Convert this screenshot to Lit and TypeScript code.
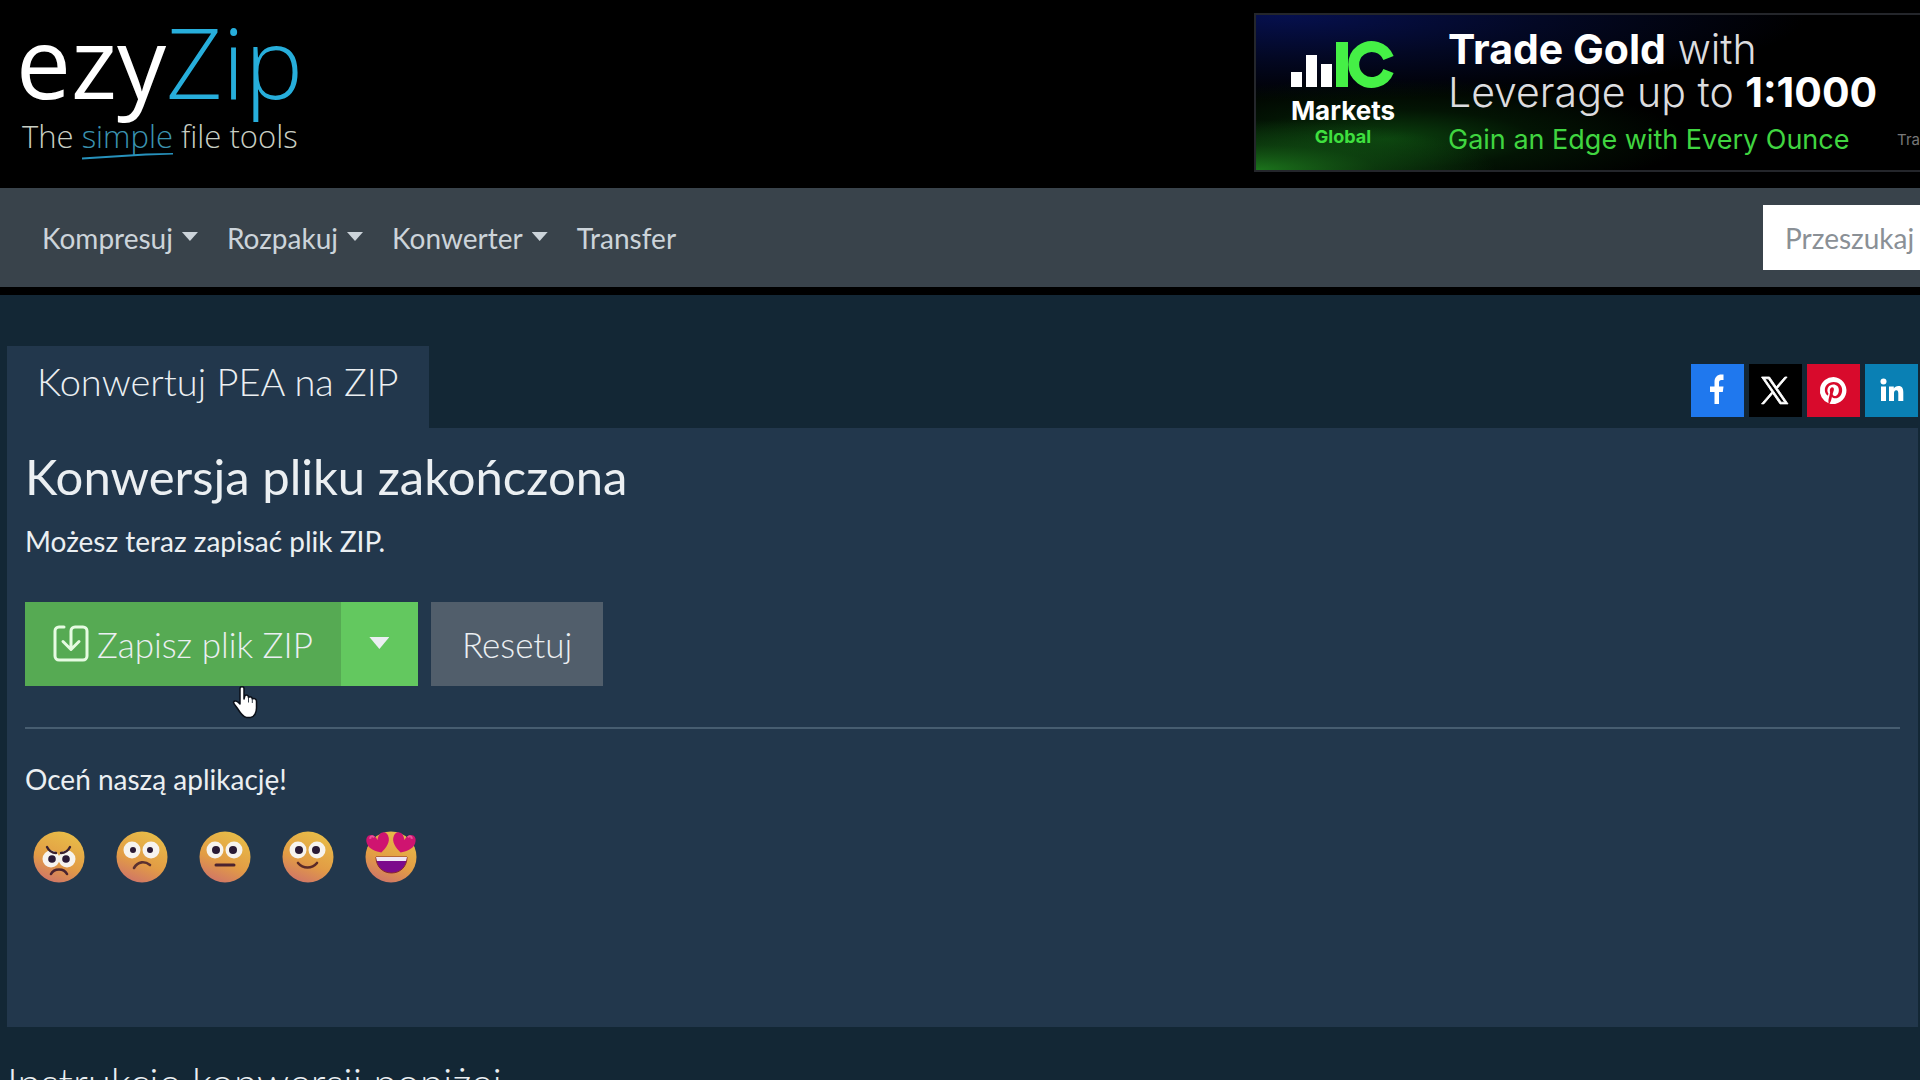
import { LitElement, html, css, svg } from "lit";
import { customElement } from "lit/decorators.js";

const navItems = [
  { label: "Kompresuj", menu: true },
  { label: "Rozpakuj", menu: true },
  { label: "Konwerter", menu: true },
  { label: "Transfer", menu: false },
];

const heart = "M0 4C-3 -5 -13 -3 -11 6C-10 12 -3 15 2 17C7 13 13 8 11 1C9 -5 2 -4 0 4Z";

const eyes = (left: number, right: number, y: number, pupil: number) => svg`
  <circle cx=${left} cy=${y} r="8.5" fill="#f6f3ee"/>
  <circle cx=${right} cy=${y} r="8.5" fill="#f6f3ee"/>
  <circle cx=${left + 1} cy=${y} r=${pupil} fill="#2a1a35"/>
  <circle cx=${right - 1} cy=${y} r=${pupil} fill="#2a1a35"/>`;

const faces = [
  {
    label: "Bardzo źle",
    art: svg`${eyes(18, 34, 28, 3.8)}
      <path d="M14 16c2 4 5 6 9 6M37 16c-2 4-5 6-9 6" fill="none" stroke="#3a2030" stroke-width="2.4" stroke-linecap="round"/>
      <path d="M18 43c3-6 13-6 16 0" fill="none" stroke="#4a2330" stroke-width="2.6" stroke-linecap="round"/>`,
  },
  {
    label: "Źle",
    art: svg`${eyes(16, 35, 19, 3)}
      <path d="M18 37c4-7 11-7 16-3" fill="none" stroke="#5a3030" stroke-width="2.6" stroke-linecap="round"/>`,
  },
  {
    label: "Średnio",
    art: svg`${eyes(16, 35, 19, 4)}
      <path d="M17 34h18" fill="none" stroke="#4a2330" stroke-width="3" stroke-linecap="round"/>`,
  },
  {
    label: "Dobrze",
    art: svg`${eyes(16, 35, 19, 4)}
      <path d="M16 32c5 6 14 6 19 0" fill="none" stroke="#5a2a28" stroke-width="2.6" stroke-linecap="round"/>`,
  },
  {
    label: "Bardzo dobrze",
    art: svg`
      <path d="M11 26h31c0 9-6 16-15.500 16S11 35 11 26z" fill="#7c0a8c" stroke="#8a2a2c" stroke-width="1"/>
      <path d="M11 26h31l-1 4H12z" fill="#eee6f4"/>
      <g transform="translate(12 5) rotate(-8)"><path d=${heart} fill="#cf1470"/><path d="M-7 2c0-3 3-3 4-1" stroke="#e8559a" stroke-width="2" fill="none"/></g>
      <g transform="translate(40 5) scale(-1 1) rotate(-8)"><path d=${heart} fill="#cf1470"/><path d="M-7 2c0-3 3-3 4-1" stroke="#e8559a" stroke-width="2" fill="none"/></g>`,
  },
];

const socials = [
  {
    name: "Facebook",
    cls: "fb",
    art: svg`<path fill="#fff" d="M23.500 40V28H19v-5.500h4.500V18c0-5 3-7.500 7-7.500h2V16h-2c-1.800 0-2.500 1-2.500 2.500v4h4.500L31.800 28H28v12z"/>`,
  },
  {
    name: "X",
    cls: "x",
    art: svg`<path fill="#fff" stroke="#fff" stroke-width="0.8" transform="translate(12.500 13) scale(1.120)" d="M14.200 10.200 22.900 0h-2.100l-7.600 8.800L7.200 0H0l9.200 13.300L0 24h2.100l8-9.300 6.400 9.300h7.200zM3 1.600h3.100l14.600 20.900h-3.100z"/>`,
  },
  {
    name: "Pinterest",
    cls: "pin",
    art: svg`<path fill="#fff" transform="translate(13 13) scale(1.130)" d="M12 0a12 12 0 0 0-4.400 23.200c-.1-.9-.2-2.400 0-3.400l1.400-6s-.3-.7-.3-1.800c0-1.600 1-2.900 2.100-2.900 1 0 1.500.8 1.500 1.700 0 1-.6 2.500-1 3.900-.3 1.200.6 2.100 1.700 2.100 2.100 0 3.700-2.200 3.700-5.400 0-2.800-2-4.800-4.900-4.800a5.100 5.100 0 0 0-5.300 5.100c0 1 .4 2.100.9 2.700v.3l-.3 1.400c-.1.200-.2.300-.4.200-1.500-.7-2.400-2.900-2.400-4.600 0-3.800 2.700-7.200 7.900-7.200 4.200 0 7.400 3 7.400 6.900 0 4.100-2.600 7.500-6.200 7.500-1.200 0-2.400-.6-2.800-1.400l-.7 2.900c-.3 1-1 2.400-1.500 3.200A12 12 0 1 0 12 0z"/>`,
  },
  {
    name: "LinkedIn",
    cls: "li",
    art: svg`<g fill="#fff"><circle cx="18.500" cy="17.500" r="3"/><path d="M16 22.500h5V37h-5zM24 22.500h4.800v2c.8-1.400 2.400-2.400 4.600-2.400 3.900 0 4.900 2.500 4.900 6.400V37h-5v-7.600c0-1.900-.4-3.200-2-3.200-1.700 0-2.300 1.300-2.300 3.200V37h-5z"/></g>`,
  },
];

@customElement("app-root")
export class AppRoot extends LitElement {
  static styles = css`
    :host {
      display: block;
      height: 100vh;
      overflow: hidden auto;
      scrollbar-width: none;
      background: #132735;
      color: #ebeff2;
      font-family: Lato, "Open Sans", sans-serif;
      font-size: 28px;
      line-height: 40px;
    }
    * { box-sizing: border-box; margin: 0; }
    a { color: inherit; text-decoration: none; }
    button { border: 0; border-radius: 0; color: inherit; font: inherit; cursor: pointer; }
    svg { display: block; }

    .header {
      display: flex;
      justify-content: space-between;
      align-items: flex-start;
      height: 188px;
      padding-top: 13px;
      background: #000;
    }
    .brand { display: flex; flex-direction: column; padding-left: 16px; }
    .wordmark {
      height: 103px;
      color: #fff;
      font: 400 98px/96px "Open Sans", "Noto Sans", sans-serif;
      white-space: nowrap;
    }
    .wordmark-zip { color: #27aedb; font-weight: 300; }
    .tagline {
      padding-left: 6px;
      color: #c9cfc4;
      font: 300 31px/40px "Open Sans", sans-serif;
      white-space: nowrap;
    }
    .simple { position: relative; color: #3b93b0; }
    .swash { position: absolute; left: 0; bottom: -3px; width: 100%; height: 8px; }

    .ad {
      display: flex;
      flex: 0 0 666px;
      height: 159px;
      padding: 13px 0 0 34px;
      border: 2px solid #24262b;
      border-right: 0;
      overflow: hidden;
      background:
        radial-gradient(ellipse 240px 50px at 0 100%, #1c741c 0%, rgba(20, 90, 22, 0.5) 50%, transparent 100%),
        radial-gradient(ellipse 300px 60px at 130px 80%, #0b420e 0%, rgba(6, 40, 8, 0.5) 50%, transparent 100%),
        radial-gradient(ellipse 520px 85px at 30px 0, #06104e 0%, #030824 50%, transparent 100%),
        #000;
      color: #fff;
      font-family: Inter, sans-serif;
      white-space: nowrap;
    }
    .ad-logo { display: flex; flex-direction: column; align-items: center; flex: 0 0 106px; padding-top: 12px; }
    .ad-markets { font-size: 26px; font-weight: 700; line-height: 30px; padding-top: 6px; }
    .ad-global { color: #3fe03f; font-size: 18px; font-weight: 700; line-height: 22px; }
    .ad-copy { flex: 1; padding-left: 52px; }
    .ad-line { font-size: 41px; font-weight: 300; line-height: 43px; color: #dcdcdf; }
    .ad-line strong { font-weight: 700; color: #fff; }
    .ad-edge { font-size: 27px; font-weight: 400; line-height: 52px; color: #40d540; }
    .ad-small { align-self: flex-end; flex: 0 0 16px; padding-bottom: 16px; font-size: 15px; line-height: 28px; color: #777; }

    .nav {
      display: flex;
      align-items: center;
      justify-content: space-between;
      height: 107px;
      padding-left: 42px;
      background: #39434b;
      border-bottom: 8px solid #000;
      color: #ccd4da;
    }
    .nav-list { display: flex; gap: 29px; padding: 0; list-style: none; }
    .nav-link { display: flex; align-items: center; gap: 9px; padding: 0; background: none; }
    .caret { width: 16px; height: 9px; margin-bottom: 2px; background: currentColor; clip-path: polygon(0 0, 100% 0, 50% 100%); }
    .search {
      flex: 0 0 157px;
      width: 157px;
      height: 65px;
      padding: 0 0 0 22px;
      border: 0;
      border-radius: 0;
      background: #fff;
      font: inherit;
      color: #333;
    }
    .search::placeholder { color: #8a9096; opacity: 1; }

    .main { padding: 51px 2px 0 7px; }
    .tabs { display: flex; justify-content: space-between; align-items: flex-end; }
    .tab { padding: 12px 30px 24px; background: #22374c; font-size: 38px; font-weight: 300; line-height: 46px; }
    .socials { display: flex; gap: 5px; padding-bottom: 11px; }
    .social { width: 53px; height: 53px; }
    .fb { background: #1f78ee; }
    .x { background: #000; }
    .pin { background: #d80a2c; }
    .li { background: #0a80b4; }

    .panel { min-height: 599px; padding: 18px; background: #22374c; }
    .done { font-size: 49px; font-weight: 400; line-height: 60px; }
    .lead { padding-top: 15px; }
    .actions { display: flex; gap: 13px; padding-top: 41px; font-size: 35px; font-weight: 300; line-height: 44px; }
    .split { position: relative; display: flex; }
    .save { display: flex; align-items: center; gap: 8px; height: 84px; padding: 0 28px; background: #56aa53; }
    .more { display: flex; align-items: center; justify-content: center; width: 77px; background: #63c85f; }
    .more .caret { width: 20px; height: 12px; }
    .reset { padding: 0 31px; background: #515e6b; }
    .pointer { position: absolute; left: 207px; top: 83px; }
    .rule { height: 2px; margin: 41px 0 30px; border: 0; background: #475d70; }
    .faces { display: flex; gap: 31px; padding: 32px 8px; }
    .face { padding: 0; background: none; }
    .next { padding-top: 25px; font-size: 42px; font-weight: 300; line-height: 60px; }
  `;

  private renderHeader() {
    return html`
      <header class="header">
        <a class="brand" href="#" aria-label="ezyZip">
          <span class="wordmark">ezy<span class="wordmark-zip">Zip</span></span>
          <span class="tagline">The <span class="simple">simple<svg class="swash" viewBox="0 0 86 8" preserveAspectRatio="none"><path d="M0 5.500 60 1.500 86 1v1.500L60 3.500 0 7.500z" fill="#2792bd"/></svg></span> file tools</span>
        </a>
        <a class="ad" href="#">
          <span class="ad-logo">
            <svg width="106" height="50" viewBox="0 0 106 50">
              <path fill="#fff" d="M1 32h11v15H1zM16 15h11v32H16zM31 24h11v23H31z"/>
              <path fill="#45f046" d="M46 2h12v45H46z"/>
              <path d="M98.500 18A18 18 0 1 0 98.500 31" fill="none" stroke="#45f046" stroke-width="11"/>
            </svg>
            <span class="ad-markets">Markets</span>
            <span class="ad-global">Global</span>
          </span>
          <span class="ad-copy">
            <div class="ad-line"><strong>Trade Gold</strong> with</div>
            <div class="ad-line">Leverage up to <strong>1:1000</strong></div>
            <div class="ad-edge">Gain an Edge with Every Ounce</div>
          </span>
          <span class="ad-small">Tra</span>
        </a>
      </header>`;
  }

  private renderNav() {
    return html`
      <nav class="nav">
        <ul class="nav-list">
          ${navItems.map((item) => html`<li>
            ${item.menu
              ? html`<button class="nav-link">${item.label}<span class="caret"></span></button>`
              : html`<a class="nav-link" href="#">${item.label}</a>`}
          </li>`)}
        </ul>
        <input class="search" type="text" aria-label="Przeszukaj" placeholder="Przeszukaj">
      </nav>`;
  }

  private renderFace(face: { label: string; art: unknown }, index: number) {
    return html`<button class="face" aria-label=${face.label}>
      <svg width="52" height="52" viewBox="0 0 52 52" overflow="visible">
        <defs>
          <linearGradient id="skin${index}" x1="0.7" y1="0" x2="0.300" y2="1">
            <stop offset="0" stop-color="#e8bd48"/>
            <stop offset="0.600" stop-color="#e29c45"/>
            <stop offset="1" stop-color="#cf7468"/>
          </linearGradient>
        </defs>
        <circle cx="26" cy="26" r="25.500" fill="url(#skin${index})"/>
        ${face.art}
      </svg>
    </button>`;
  }

  render() {
    return html`
      ${this.renderHeader()} ${this.renderNav()}
      <main class="main">
        <div class="tabs">
          <h1 class="tab">Konwertuj PEA na ZIP</h1>
          <div class="socials">
            ${socials.map((s) => html`<a class="social ${s.cls}" href="#" aria-label=${s.name}>
              <svg width="53" height="53" viewBox="0 0 53 53">${s.art}</svg></a>`)}
          </div>
        </div>
        <section class="panel">
          <h2 class="done">Konwersja pliku zakończona</h2>
          <p class="lead">Możesz teraz zapisać plik ZIP.</p>
          <div class="actions">
            <div class="split">
              <button class="save">
                <svg width="36" height="38" viewBox="0 0 36 38" fill="none" stroke="#e6fbe2" stroke-width="3" stroke-linecap="round" stroke-linejoin="round">
                  <path d="M11 2H6a4 4 0 0 0-4 4v25a4 4 0 0 0 4 4h24a4 4 0 0 0 4-4V6a4 4 0 0 0-4-4H22a4 4 0 0 0-4 4v18M10 16.500l8 8 8-8"/>
                </svg>
                Zapisz plik ZIP
              </button>
              <button class="more" aria-label="Więcej opcji"><span class="caret"></span></button>
              <svg class="pointer" width="28" height="34" viewBox="0 0 28 34">
                <path d="M8 3.500C8 1 12 1 12 3.500V14l1-3.500c2-1 3.500 0 3.500 2 1.500-1.500 3.800-.5 3.800 1.500 2-1 4.200 0 4.200 2.500V23c0 4-2 9-6 9.500h-4C11 32 8 27.500 5.500 23.500 4 21 1.500 19 1.500 17c1-2 4-1 6.500 2z" fill="#fff" stroke="#0a0f18" stroke-width="1.500" stroke-linejoin="round"/>
                <path d="M16.500 12.500v5M20.300 14v4" stroke="#39424c" stroke-width="1"/>
              </svg>
            </div>
            <button class="reset">Resetuj</button>
          </div>
          <hr class="rule">
          <p>Oceń naszą aplikację!</p>
          <div class="faces">${faces.map((f, i) => this.renderFace(f, i))}</div>
        </section>
        <h2 class="next">Instrukcje konwersji poniżej</h2>
      </main>`;
  }
}
